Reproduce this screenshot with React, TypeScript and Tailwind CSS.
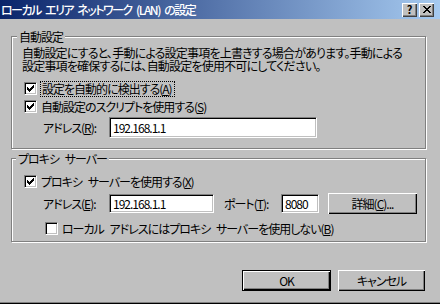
import React from 'react';

const U: React.FC<{ children: React.ReactNode }> = ({ children }) => (
  <span className="underline underline-offset-[1px]">{children}</span>
);

const Check: React.FC<{ checked?: boolean }> = ({ checked }) => (
  <span className="w-[13px] h-[13px] shrink-0 bg-white border border-[#808080] border-r-white border-b-white shadow-[inset_1px_1px_0_#000,inset_-1px_-1px_0_#c0c0c0] flex items-center justify-center">
    {checked && (
      <svg width="7" height="7" viewBox="0 0 7 7" shapeRendering="crispEdges">
        {[2, 3, 4, 3, 2, 1, 0].map((y, x) => (
          <rect key={x} x={x} y={y} width="1" height="3" fill="#000" />
        ))}
      </svg>
    )}
  </span>
);

const Field: React.FC<{ value: string; className: string }> = ({ value, className }) => (
  <div
    className={`shrink-0 bg-white border border-[#808080] border-r-white border-b-white shadow-[inset_1px_1px_0_#000,inset_-1px_-1px_0_#c0c0c0] flex items-center pl-[3px] ${className}`}
  >
    {value}
  </div>
);

const Btn: React.FC<{ children: React.ReactNode; isDefault?: boolean; className: string }> = ({
  children,
  isDefault,
  className,
}) => (
  <div
    className={`shrink-0 flex items-center justify-center bg-[#c0c0c0] ${
      isDefault
        ? 'border border-black shadow-[inset_1px_1px_0_#fff,inset_-1px_-1px_0_#000,inset_-2px_-2px_0_#808080]'
        : 'shadow-[inset_1px_1px_0_#fff,inset_-1px_-1px_0_#000,inset_-2px_-2px_0_#808080]'
    } ${className}`}
  >
    {children}
  </div>
);

const CaptionBtn: React.FC<{ children: React.ReactNode }> = ({ children }) => (
  <div className="w-[15px] h-[14px] bg-[#c0c0c0] flex items-center justify-center shadow-[inset_1px_1px_0_#fff,inset_-1px_-1px_0_#404040,inset_-2px_-2px_0_#808080] text-black font-bold text-[11px] leading-none tracking-normal">
    {children}
  </div>
);

export default function App() {
  return (
    <div className="w-[440px] h-[304px] bg-[#c0c0c0] flex flex-col overflow-hidden text-[12px] leading-[13px] tracking-[-1px] [word-spacing:4px] whitespace-nowrap text-black font-['Noto_Sans_CJK_JP','Noto_Sans',sans-serif] [font-feature-settings:'palt'] shadow-[inset_0_-1px_0_#000,inset_0_-2px_0_#808080]">
      <div className="h-[19px] shrink-0 bg-[linear-gradient(to_right,#0a246a,#a6caf0)] flex items-center justify-between pr-[6px]">
        <span className="text-white font-medium tracking-[-1.5px] [word-spacing:3px] pl-[1px]">ローカル エリア ネットワーク (LAN) の設定</span>
        <div className="flex gap-[2px]">
          <CaptionBtn>?</CaptionBtn>
          <CaptionBtn>
            <svg width="8" height="7" viewBox="0 0 8 7" shapeRendering="crispEdges">
              <path d="M0 0h2v1h1v1h2V1h1V0h2v1H7v1H6v1H5v1h1v1h1v1h1v1H6V6H5V5H3v1H2v1H0V6h1V5h1V4h1V3H2V2H1V1H0z" fill="#000" />
            </svg>
          </CaptionBtn>
        </div>
      </div>

      <div className="px-[11px] pt-[17px] flex flex-col">
        <div className="relative w-[415px] h-[113px] border border-[#808080] shadow-[1px_1px_0_#fff,inset_1px_1px_0_#fff] pt-[9px] pl-[10px] flex flex-col">
          <span className="absolute -top-[7px] left-[5px] px-[2px] bg-[#c0c0c0]">自動設定</span>
          <p className="tracking-[-0.8px]">自動設定にすると、手動による設定事項を上書きする場合があります。手動による</p>
          <p className="tracking-[-0.8px]">設定事項を確保するには、自動設定を使用不可にしてください。</p>
          <div className="mt-[9px] h-[15px] flex items-center pl-[2px] gap-[3px]">
            <Check checked />
            <span className="border border-dotted border-black pl-[1px] pr-[2px] h-[16px] flex items-center">
              設定を自動的に検出する(<U>A</U>)
            </span>
          </div>
          <div className="mt-[3px] h-[15px] flex items-center pl-[2px] gap-[4px]">
            <Check checked />
            <span>
              自動設定のスクリプトを使用する(<U>S</U>)
            </span>
          </div>
          <div className="mt-[3px] h-[21px] flex items-center">
            <span className="ml-[21px] w-[66px]">
              アドレス(<U>R</U>):
            </span>
            <Field value="192.168.1.1" className="w-[208px] h-[21px]" />
          </div>
        </div>

        <div className="relative mt-[9px] w-[415px] h-[84px] border border-[#808080] shadow-[1px_1px_0_#fff,inset_1px_1px_0_#fff] pt-[15px] pl-[10px] flex flex-col">
          <span className="absolute -top-[7px] left-[4px] px-[2px] bg-[#c0c0c0]">プロキシ サーバー</span>
          <div className="h-[15px] flex items-center pl-[2px] gap-[4px]">
            <Check checked />
            <span>
              プロキシ サーバーを使用する(<U>X</U>)
            </span>
          </div>
          <div className="mt-[4px] h-[21px] flex items-center">
            <span className="ml-[21px] w-[66px]">
              アドレス(<U>E</U>):
            </span>
            <Field value="192.168.1.1" className="w-[105px] h-[19px]" />
            <span className="ml-[10px] w-[57px]">
              ポート(<U>T</U>):
            </span>
            <Field value="8080" className="w-[38px] h-[19px]" />
            <Btn className="ml-[9px] w-[89px] h-[21px]">
              詳細(<U>C</U>)...
            </Btn>
          </div>
          <div className="mt-[7px] h-[15px] flex items-center pl-[23px] gap-[4px]">
            <Check />
            <span>
              ローカル アドレスにはプロキシ サーバーを使用しない(<U>B</U>)
            </span>
          </div>
        </div>
      </div>

      <div className="mt-[28px] flex justify-end gap-[7px] pr-[15px]">
        <Btn isDefault className="w-[89px] h-[21px]">
          OK
        </Btn>
        <Btn className="w-[87px] h-[21px]">キャンセル</Btn>
      </div>
    </div>
  );
}
